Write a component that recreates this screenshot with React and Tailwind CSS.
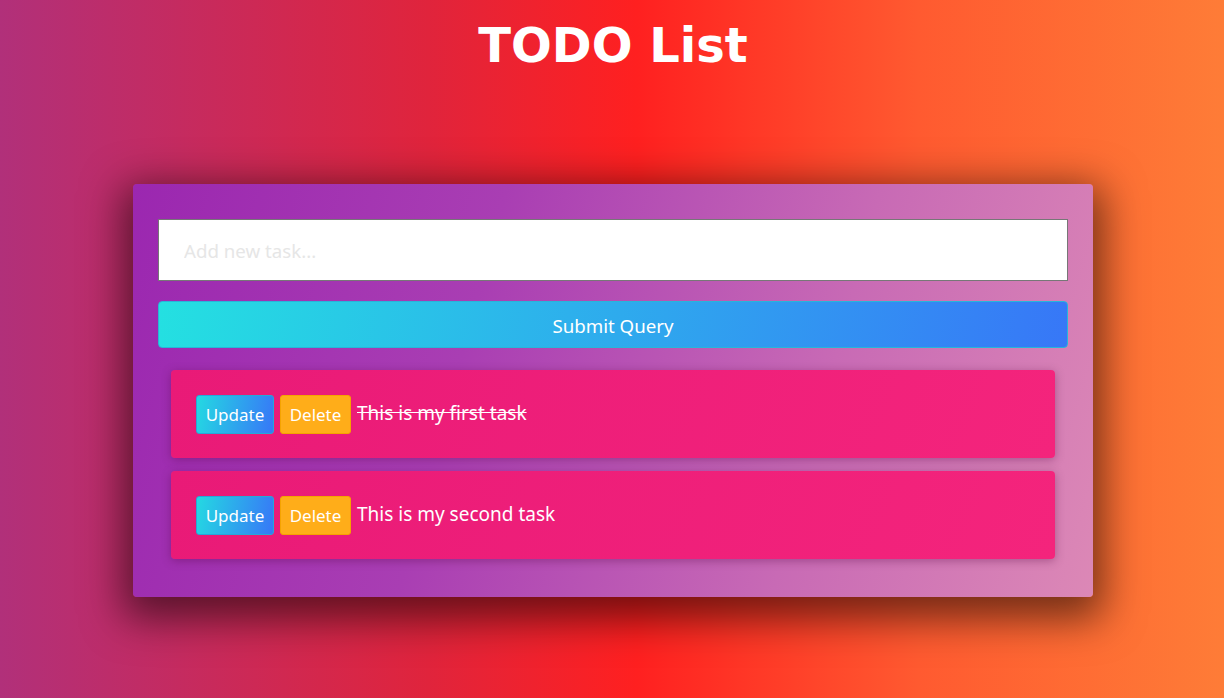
export default function App() {
  const font = { fontFamily: '"Noto Sans", "Open Sans", sans-serif' };
  return (
    <div
      className="min-h-[698px] w-full flex flex-col items-center bg-[linear-gradient(90deg,#b1307a_0%,#e0243c_35%,#ff2020_52%,#ff5a30_75%,#fe7c37_100%)]"
      style={font}
    >
      <h1
        className="mt-[19px] ml-[2px] text-[48px] leading-[52px] font-bold text-white"
        style={{ fontFamily: '"DejaVu Sans", sans-serif' }}
      >
        TODO List
      </h1>
      <div className="mt-[113px] ml-[2px] w-[960px] rounded-[4px] bg-[linear-gradient(105deg,#9b27b0_0%,#a93eb3_35%,#c86ab5_70%,#dc88b6_100%)] shadow-[0_12px_40px_10px_rgba(0,0,0,0.55)] px-[25px] pt-[35px] pb-[38px]">
        <input
          className="w-full h-[62px] bg-white border border-[#777] px-[25px] text-[18.7px] text-gray-700 placeholder:text-[#e6e6e6] outline-none"
          placeholder="Add new task..."
        />
        <button className="mt-[20px] w-full h-[47px] pt-[3px] rounded-[4px] border border-[#27b6d8] bg-[linear-gradient(100deg,#24e0e1_0%,#2db0ec_45%,#3777f7_100%)] text-white text-[18.7px]">
          Submit Query
        </button>
        <div className="mt-[22px] mx-[13px] flex flex-col gap-[13px]">
          {[
            { t: 'This is my first task', done: true },
            { t: 'This is my second task', done: false },
          ].map((task) => (
            <div
              key={task.t}
              className="h-[88px] rounded-[4px] bg-[linear-gradient(110deg,#e91a77_0%,#f4247c_100%)] shadow-[0_2px_10px_rgba(80,0,60,0.35)] flex items-center px-[25px] gap-[6px]"
            >
              <button className="h-[39px] w-[78px] rounded-[3px] border border-[#25a8d8] bg-[linear-gradient(100deg,#24d9e2_0%,#3777f7_100%)] text-white text-[17px] mt-[1px]">
                Update
              </button>
              <button className="h-[39px] w-[71px] rounded-[3px] border border-[#f5a300] bg-[#ffad19] text-white text-[17px] mt-[1px]">
                Delete
              </button>
              <span className={`text-white text-[19px] -mt-[2px] ${task.done ? 'line-through' : ''}`}>{task.t}</span>
            </div>
          ))}
        </div>
      </div>
    </div>
  );
}
